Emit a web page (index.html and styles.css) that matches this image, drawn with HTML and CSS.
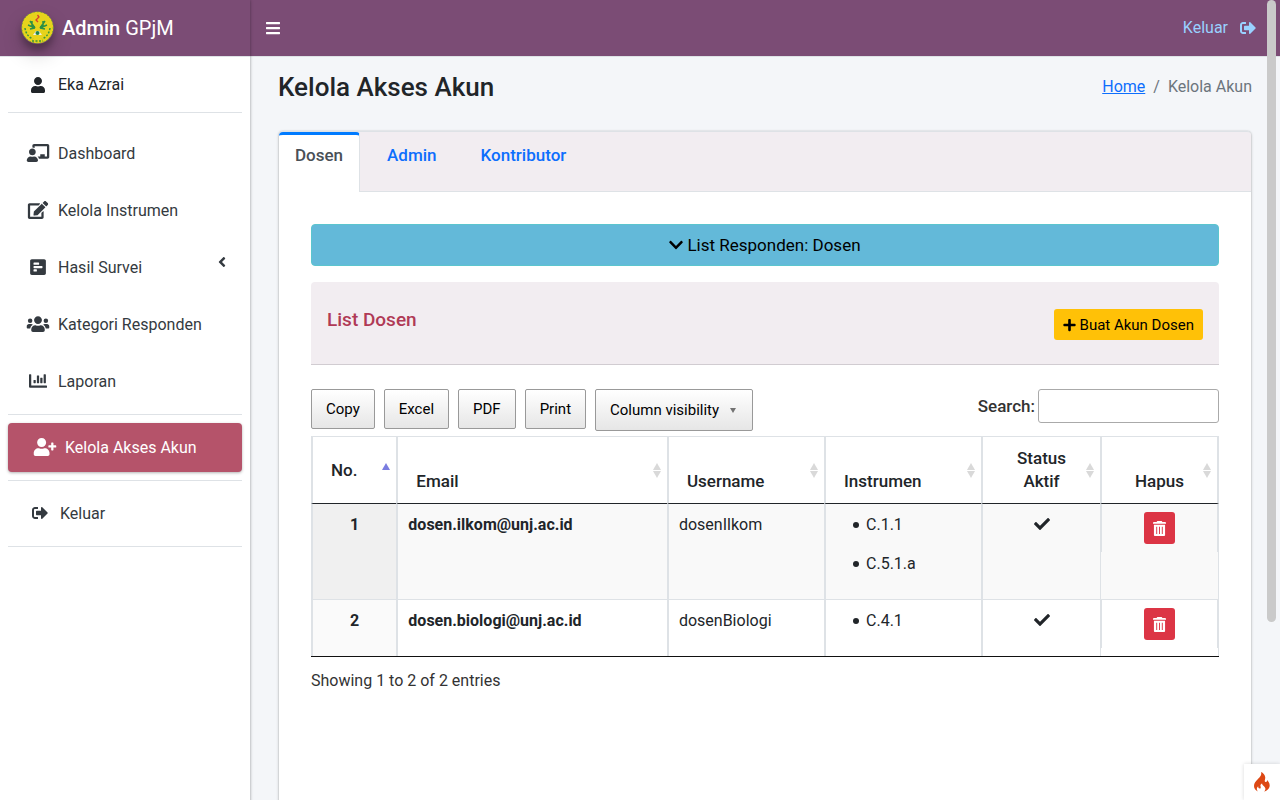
FILE: index.html
```html
<!DOCTYPE html>
<html lang="id">
<head>
<meta charset="utf-8">
<title>Admin GPjM</title>
<link rel="stylesheet" href="styles.css">
</head>
<body>
<svg class="defs" aria-hidden="true">
  <symbol id="user" viewBox="0 0 448 512"><path d="M224 256c70.7 0 128-57.3 128-128S294.700 0 224 0 96 57.300 96 128s57.300 128 128 128zm89.600 32h-16.700c-22.200 10.200-46.900 16-72.900 16s-50.600-5.800-72.900-16h-16.700C60.200 288 0 348.200 0 422.400V464c0 26.500 21.500 48 48 48h352c26.500 0 48-21.500 48-48v-41.600c0-74.200-60.200-134.400-134.400-134.400z"/></symbol>
  <symbol id="bars" viewBox="0 0 448 512"><path d="M16 132h416c9 0 16-7 16-16V76c0-9-7-16-16-16H16C7 60 0 67 0 76v40c0 9 7 16 16 16zm0 160h416c9 0 16-7 16-16v-40c0-9-7-16-16-16H16c-9 0-16 7-16 16v40c0 9 7 16 16 16zm0 160h416c9 0 16-7 16-16v-40c0-9-7-16-16-16H16c-9 0-16 7-16 16v40c0 9 7 16 16 16z"/></symbol>
  <symbol id="signout" viewBox="0 0 512 512"><path d="M497 273L329 441c-15 15-41 4.500-41-17v-96H152c-13.300 0-24-10.700-24-24v-96c0-13.300 10.700-24 24-24h136V88c0-21.400 25.900-32 41-17l168 168c9.300 9.400 9.300 24.600 0 34zM192 436v-40c0-6.600-5.400-12-12-12H96c-17.700 0-32-14.300-32-32V160c0-17.700 14.300-32 32-32h84c6.600 0 12-5.400 12-12V76c0-6.600-5.400-12-12-12H96c-53 0-96 43-96 96v192c0 53 43 96 96 96h84c6.600 0 12-5.400 12-12z"/></symbol>
  <symbol id="teacher" viewBox="0 0 640 512"><path d="M208 352c-2.400 0-4.800.35-7.060 1.090C187.980 357.300 174.350 360 160 360c-14.350 0-27.980-2.700-40.950-6.910-2.280-.74-4.660-1.090-7.050-1.090C49.940 352-.33 402.480 0 464.620.14 490.880 21.730 512 48 512h224c26.270 0 47.860-21.120 48-47.380.33-62.140-49.940-112.620-112-112.620zm-48-32c53.020 0 96-42.980 96-96s-42.980-96-96-96-96 42.980-96 96 42.980 96 96 96zM592 0H208c-26.470 0-48 22.250-48 49.590V96c23.420 0 45.100 6.780 64 17.800V64h352v288h-64v-64H384v64h-76.240c19.100 16.690 33.120 38.730 39.690 64H592c26.470 0 48-22.250 48-49.590V49.590C640 22.250 618.470 0 592 0z"/></symbol>
  <symbol id="edit" viewBox="0 0 576 512"><path d="M402.6 83.2l90.2 90.2c3.8 3.8 3.8 10 0 13.8L274.4 405.6l-92.8 10.3c-12.4 1.4-22.9-9.1-21.5-21.5l10.3-92.8L388.8 83.2c3.8-3.8 10-3.8 13.8 0zm162-22.9l-48.8-48.8c-15.2-15.2-39.9-15.2-55.2 0l-35.4 35.4c-3.8 3.8-3.8 10 0 13.8l90.2 90.2c3.8 3.8 10 3.8 13.8 0l35.4-35.4c15.2-15.3 15.2-40 0-55.2zM384 346.2V448H64V128h229.800c3.2 0 6.2-1.3 8.5-3.5l40-40c7.6-7.6 2.2-20.5-8.5-20.5H48C21.500 64 0 85.500 0 112v352c0 26.500 21.500 48 48 48h352c26.500 0 48-21.500 48-48V306.200c0-10.700-12.900-16-20.500-8.500l-40 40c-2.200 2.300-3.500 5.300-3.500 8.500z"/></symbol>
  <symbol id="poll" viewBox="0 0 448 512"><path d="M448 432V80c0-26.500-21.500-48-48-48H48C21.500 32 0 53.500 0 80v352c0 26.500 21.500 48 48 48h352c26.500 0 48-21.500 48-48zM112 192c-9 0-16-7-16-16v-32c0-9 7-16 16-16h128c9 0 16 7 16 16v32c0 9-7 16-16 16H112zm0 96c-9 0-16-7-16-16v-32c0-9 7-16 16-16h224c9 0 16 7 16 16v32c0 9-7 16-16 16H112zm0 96c-9 0-16-7-16-16v-32c0-9 7-16 16-16h64c9 0 16 7 16 16v32c0 9-7 16-16 16h-64z"/></symbol>
  <symbol id="users" viewBox="0 0 640 512"><circle cx="96" cy="160" r="64"/><circle cx="544" cy="160" r="64"/><path d="M576 256h-64c-17.600 0-33.500 7.100-45.100 18.600 40.300 22.100 68.900 62 75.100 109.400h66c17.700 0 32-14.300 32-32v-32c0-35.300-28.700-64-64-64zm-256 0c61.900 0 112-50.100 112-112S381.900 32 320 32 208 82.100 208 144s50.100 112 112 112zm76.800 32h-8.300c-20.800 10-43.900 16-68.500 16s-47.600-6-68.500-16h-8.300C179.600 288 128 339.600 128 403.200V432c0 26.500 21.500 48 48 48h288c26.500 0 48-21.500 48-48v-28.800c0-63.600-51.600-115.200-115.200-115.200zm-223.700-13.400C161.500 263.100 145.600 256 128 256H64c-35.300 0-64 28.700-64 64v32c0 17.700 14.300 32 32 32h65.900c6.300-47.400 34.900-87.300 75.200-109.400z"/></symbol>
  <symbol id="chart" viewBox="0 0 512 512"><path d="M0 80a16 16 0 0 1 16-16h32a16 16 0 0 1 16 16v304h432a16 16 0 0 1 16 16v32a16 16 0 0 1-16 16H32a32 32 0 0 1-32-32z"/><rect x="128" y="224" width="64" height="96" rx="13"/><rect x="224" y="96" width="64" height="224" rx="13"/><rect x="320" y="160" width="64" height="160" rx="13"/><rect x="416" y="64" width="64" height="256" rx="13"/></symbol>
  <symbol id="userplus" viewBox="0 0 640 512"><path d="M624 208h-64v-64c0-8.800-7.200-16-16-16h-32c-8.800 0-16 7.200-16 16v64h-64c-8.800 0-16 7.200-16 16v32c0 8.800 7.200 16 16 16h64v64c0 8.800 7.200 16 16 16h32c8.800 0 16-7.200 16-16v-64h64c8.800 0 16-7.200 16-16v-32c0-8.800-7.200-16-16-16zm-400 48c70.700 0 128-57.300 128-128S294.700 0 224 0 96 57.300 96 128s57.300 128 128 128zm89.600 32h-16.700c-22.200 10.200-46.900 16-72.900 16s-50.600-5.800-72.900-16h-16.700C60.200 288 0 348.200 0 422.400V464c0 26.500 21.500 48 48 48h352c26.500 0 48-21.500 48-48v-41.600c0-74.200-60.200-134.400-134.400-134.400z"/></symbol>
  <symbol id="angle" viewBox="0 0 256 512"><path d="M31.700 239l136-136c9.400-9.400 24.600-9.400 33.900 0l22.600 22.600c9.400 9.400 9.400 24.600 0 33.900L127.900 256l96.400 96.400c9.400 9.400 9.400 24.600 0 33.900L201.700 409c-9.400 9.400-24.600 9.400-33.900 0l-136-136c-9.500-9.400-9.500-24.600-.1-34z"/></symbol>
  <symbol id="chevron" viewBox="0 0 448 512"><path d="M207 381.500L12.700 187.100c-9.400-9.400-9.400-24.600 0-33.900l22.700-22.700c9.400-9.400 24.500-9.400 33.900 0L224 284.500l154.700-154c9.400-9.300 24.500-9.300 33.900 0l22.700 22.700c9.400 9.400 9.400 24.600 0 33.900L241 381.500c-9.400 9.400-24.600 9.400-34 0z"/></symbol>
  <symbol id="plus" viewBox="0 0 448 512"><path d="M416 208H272V64c0-17.700-14.300-32-32-32h-32c-17.700 0-32 14.300-32 32v144H32c-17.700 0-32 14.300-32 32v32c0 17.700 14.300 32 32 32h144v144c0 17.700 14.300 32 32 32h32c17.700 0 32-14.300 32-32V304h144c17.700 0 32-14.300 32-32v-32c0-17.700-14.300-32-32-32z"/></symbol>
  <symbol id="check" viewBox="0 0 512 512"><path d="M173.900 439.400L7.500 273c-10-10-10-26.200 0-36.200l36.200-36.200c10-10 26.200-10 36.200 0L192 312.700 432.100 72.600c10-10 26.200-10 36.200 0l36.200 36.200c10 10 10 26.200 0 36.200L210.100 439.400c-10 10-26.200 10-36.200 0z"/></symbol>
  <symbol id="trash" viewBox="0 0 14 16"><path d="M4 1q0-1 1-1h4q1 0 1 1h3q1 0 1 1v1H0V2q0-1 1-1z"/><path fill-rule="evenodd" d="M1 4h12v11q0 1-1 1H2q-1 0-1-1zM3.500 6v8h1V6zM6.500 6v8h1V6zM9.500 6v8h1V6z"/></symbol>
</svg>
<div class="app">
  <aside class="sidebar">
    <a class="brand" href="#">
      <svg class="logo" viewBox="0 0 33 33" aria-hidden="true">
        <circle cx="16.500" cy="16.500" r="15.800" fill="#e6d31c" stroke="#5f9b34" stroke-width="1" stroke-dasharray="1.500 2"/>
        <path d="M9 10l5 7M7 14l7 3M9 18l5-1M24 10l-5 7M26 14l-7 3M24 18l-5-1M11 10v5M22 10v5" stroke="#2c8f45" stroke-width="1.500" fill="none"/>
        <path d="M4 17q1 8 8 11M29 17q-1 8-8 11M11 30h11" stroke="#39963b" stroke-width="1.500" stroke-dasharray="2 1.500" fill="none"/>
        <path d="M12 24l3-4h3l3 4z" fill="#eef0e8"/><circle cx="16.500" cy="22" r="2" fill="#22844a"/>
        <path d="M16.500 4l1.500 2-3 3 2 2" stroke="#d8402b" stroke-width="1.300" fill="none"/>
      </svg>
      <span><b>Admin</b> GPjM</span>
    </a>
    <div class="user-panel"><span class="ico"><svg class="i16"><use href="#user"/></svg></span><a href="#">Eka Azrai</a></div>
    <nav class="nav">
      <a class="item" href="#"><span class="ico"><svg class="i18"><use href="#teacher"/></svg></span>Dashboard</a>
      <a class="item" href="#"><span class="ico"><svg class="i18"><use href="#edit"/></svg></span>Kelola Instrumen</a>
      <a class="item" href="#"><span class="ico"><svg class="i18"><use href="#poll"/></svg></span>Hasil Survei<svg class="arrow"><use href="#angle"/></svg></a>
      <a class="item" href="#"><span class="ico"><svg class="i18"><use href="#users"/></svg></span>Kategori Responden</a>
      <a class="item" href="#"><span class="ico"><svg class="i18"><use href="#chart"/></svg></span>Laporan</a>
      <hr>
      <a class="item active" href="#"><span class="ico"><svg class="i18"><use href="#userplus"/></svg></span>Kelola Akses Akun</a>
      <hr>
      <a class="item logout" href="#"><span class="ico"><svg class="i16"><use href="#signout"/></svg></span>Keluar</a>
      <hr>
    </nav>
  </aside>
  <div class="page">
    <header class="topbar">
      <button class="menu" aria-label="Menu"><svg><use href="#bars"/></svg></button>
      <a href="#">Keluar <svg><use href="#signout"/></svg></a>
    </header>
    <main class="content">
      <div class="heading">
        <h1>Kelola Akses Akun</h1>
        <nav class="crumbs"><a href="#">Home</a><span>/</span><span>Kelola Akun</span></nav>
      </div>
      <section class="card">
        <div class="tabs" role="tablist">
          <button class="tab selected" role="tab" aria-selected="true">Dosen</button>
          <button class="tab" role="tab">Admin</button>
          <button class="tab" role="tab">Kontributor</button>
        </div>
        <div class="card-body">
          <button class="collapse"><svg><use href="#chevron"/></svg>List Responden: Dosen</button>
          <div class="panel-head">
            <h2>List Dosen</h2>
            <button class="create"><svg><use href="#plus"/></svg>Buat Akun Dosen</button>
          </div>
          <div class="tools">
            <div class="exports">
              <button>Copy</button><button>Excel</button><button>PDF</button><button>Print</button>
              <button class="colvis">Column visibility <span class="caret"></span></button>
            </div>
            <div class="search"><label for="search">Search:</label><input id="search" type="search"></div>
          </div>
          <table>
            <colgroup><col class="c-no"><col class="c-email"><col class="c-mid"><col class="c-mid"><col class="c-end"><col class="c-end"></colgroup>
            <thead>
              <tr><th class="no asc">No.</th><th>Email</th><th>Username</th><th>Instrumen</th><th class="mid">Status Aktif</th><th class="mid">Hapus</th></tr>
            </thead>
            <tbody>
              <tr class="odd">
                <td class="num">1</td><td class="mail">dosen.ilkom@unj.ac.id</td><td>dosenIlkom</td>
                <td><ul><li>C.1.1</li><li>C.5.1.a</li></ul></td>
                <td class="tick"><svg><use href="#check"/></svg></td>
                <td class="del"><div><button aria-label="Hapus"><svg><use href="#trash"/></svg></button></div></td>
              </tr>
              <tr>
                <td class="num">2</td><td class="mail">dosen.biologi@unj.ac.id</td><td>dosenBiologi</td>
                <td><ul><li>C.4.1</li></ul></td>
                <td class="tick"><svg><use href="#check"/></svg></td>
                <td class="del"><div><button aria-label="Hapus"><svg><use href="#trash"/></svg></button></div></td>
              </tr>
            </tbody>
          </table>
          <p class="info">Showing 1 to 2 of 2 entries</p>
        </div>
      </section>
    </main>
  </div>
  <div class="scroll-thumb"></div>
  <a class="debug" href="#" aria-label="Debug"><svg viewBox="0 0 16 20"><path d="M7 0c1 3-1 5-3.500 7.500C1.500 9.500 0 11.200 0 14c0 2.500 1.500 4.600 4 5.500-1.600-1.700-1.600-3.600.2-5.200-.1 1.500.6 2.200 1.500 2.200 1.700 0 .9-1.800.7-3 .2-1 .8-1.700 1.700-2-.3 1.800 3.600 3 3.300 5.600-.1 1.100-.6 1.800-1.300 2.400 3.200-.8 5.600-3 5.600-6 0-2.500-1.300-3.800-2.400-5.500-.1 1.300-.7 2-1.600 1.900-2-.3-.1-3-.5-5C10.700 2.600 9.300.9 7 0z"/></svg></a>
</div>
</body>
</html>
```
FILE: styles.css
```css
* { box-sizing: border-box; }
body {
  margin: 0;
  font: 16px/24px Roboto, "Liberation Sans", sans-serif;
  color: #212529;
  background: #f4f6f9;
}
button, input { font: inherit; color: inherit; }
button { cursor: pointer; }
a { color: inherit; text-decoration: none; }
svg { fill: currentColor; }
.defs { display: none; }
.app {
  position: relative;
  display: grid;
  grid-template-columns: 250px minmax(0, 1fr);
  height: 100vh;
  overflow: hidden;
}

.sidebar {
  background: #fff;
  color: #343a40;
  box-shadow: 0 0 3px rgba(0, 0, 0, .4);
  z-index: 1;
}
.brand {
  display: flex;
  align-items: center;
  gap: 8px;
  height: 57px;
  padding: 0 21px 1px;
  background: #7b4c75;
  border-bottom: 1px solid #dee2e6;
  color: #fff;
  font-size: 20px;
  font-weight: 400;
}
.brand b { font-weight: 500; }
.logo {
  width: 33px;
  height: 33px;
  border-radius: 50%;
  box-shadow: 0 10px 20px rgba(0, 0, 0, .19), 0 6px 6px rgba(0, 0, 0, .23);
}
.user-panel {
  display: flex;
  align-items: center;
  height: 56px;
  margin: 0 8px;
  padding-left: 16px;
  border-bottom: 1px solid #dee2e6;
  color: #212529;
}
.ico {
  display: flex;
  justify-content: center;
  width: 28px;
  margin-right: 6px;
}
.i16 { width: 24px; height: 16px; }
.i18 { width: 24px; height: 18px; }
.nav { padding: 12px 8px; }
.item {
  display: flex;
  align-items: center;
  height: 57px;
  padding-left: 16px;
}
.item .ico { padding-bottom: 2px; }
.nav hr {
  height: 1px;
  margin: 4px 0;
  border: 0;
  background: #dee2e6;
}
.item.active {
  height: 49px;
  margin: 8px 0;
  padding-left: 23px;
  border-radius: 4px;
  background: #b5536a;
  color: #fff;
  box-shadow: 0 1px 3px rgba(0, 0, 0, .3);
}
.logout { padding-left: 18px; }
.arrow {
  width: 8px;
  height: 16px;
  margin: 0 16px 12px auto;
}

.topbar {
  display: flex;
  justify-content: space-between;
  align-items: center;
  height: 57px;
  padding: 0 24px 1px 15px;
  background: #7b4c75;
  border-bottom: 1px solid #dee2e6;
  color: #99d1ff;
}
.topbar a { display: flex; align-items: center; gap: 12px; }
.topbar svg { width: 16px; height: 16px; }
.menu {
  display: flex;
  padding: 0;
  border: 0;
  background: none;
  color: #fff;
}
.content { padding: 0 28px; }
.heading {
  display: flex;
  justify-content: space-between;
  align-items: center;
  height: 74px;
  padding-bottom: 14px;
}
h1 { margin: 0; font-size: 26px; line-height: 30px; font-weight: 500; }
.crumbs { display: flex; gap: 8px; color: #6c757d; }
.crumbs a { color: #0d6efd; text-decoration: underline; }

.card {
  min-height: 800px;
  margin: 0 1px;
  border-radius: 4px;
  background: #fff;
  box-shadow: 0 0 1px rgba(0, 0, 0, .25), 0 1px 3px rgba(0, 0, 0, .3);
}
.tabs {
  display: flex;
  gap: 10px;
  height: 61px;
  border-top: 1px solid #dee2e6;
  border-bottom: 1px solid #dee2e6;
  border-radius: 4px 4px 0 0;
  background: #f2edf1;
}
.tab {
  display: flex;
  height: 60px;
  padding: 8px 16px;
  border: 0 solid transparent;
  border-width: 3px 1px 0;
  border-radius: 4px 4px 0 0;
  background: none;
  color: #0d6efd;
  font-size: 17px;
  font-weight: 500;
}
.tab.selected {
  border-top-color: #007bff;
  border-right-color: #dee2e6;
  border-left-width: 0;
  background: #fff;
  color: #495057;
}
.card-body { padding: 32px; }
.collapse {
  display: flex;
  justify-content: center;
  align-items: center;
  gap: 4px;
  width: 100%;
  height: 42px;
  border: 1px solid #5bc5ce;
  border-radius: 4px;
  background: #63b9d9;
  color: #000;
}
.collapse svg { width: 14px; height: 16px; }
.panel-head {
  display: flex;
  justify-content: space-between;
  align-items: flex-start;
  margin: 16px 0 24px;
  height: 83px;
  padding: 27px 16px;
  border-bottom: 1px solid #d1ccd1;
  border-radius: 4px 4px 0 0;
  background: #f2edf1;
}
h2 { margin: 0; font-size: 19px; line-height: 22px; font-weight: 500; color: #b03a56; }
.create {
  display: flex;
  align-items: center;
  gap: 4px;
  height: 31px;
  padding: 0 9px;
  border: 0;
  border-radius: 3px;
  background: #ffc107;
  color: #000;
  font-size: 15px;
}
.create svg { width: 13px; height: 14px; }
.collapse { font-size: 17px; }
.tools {
  display: flex;
  justify-content: space-between;
  align-items: flex-start;
  height: 47px;
}
.exports { display: flex; align-items: flex-start; gap: 9px; }
.exports button {
  height: 40px;
  padding: 0 14px;
  border: 1px solid #999;
  border-radius: 2px;
  background: linear-gradient(#fff, #e6e6e6);
  color: #000;
  font-size: 15px;
}
.exports .colvis { height: 42px; }
.caret {
  display: inline-block;
  margin: 0 2px 2px 7px;
  border: 3px solid transparent;
  border-top: 5px solid #737373;
  border-bottom: 0;
}
.search { display: flex; align-items: center; gap: 3px; color: #333; }
.search label { font-size: 17px; font-weight: 500; }
.search input {
  width: 181px;
  height: 34px;
  border: 1px solid #aaa;
  border-radius: 3px;
  background: #fff;
}

table {
  width: 100%;
  table-layout: fixed;
  border-collapse: separate;
  border-spacing: 0;
  border-bottom: 1px solid #111;
}
.c-no { width: 9.4%; }
.c-email { width: 29.8%; }
.c-mid { width: 17.3%; }
.c-end { width: 13.1%; }
th {
  position: relative;
  height: 68px;
  padding: 10px 18px;
  border: 0 solid #dee2e6;
  border-width: 1px 0 1px 2px;
  border-bottom-color: #212529;
  font-size: 17px;
  line-height: 23px;
  font-weight: 500;
  text-align: left;
  vertical-align: bottom;
}
th:last-child { border-right-width: 2px; }
th.no { vertical-align: middle; }
th.mid { padding: 10px 30px; text-align: center; }
th::before, th::after {
  content: "";
  position: absolute;
  right: 6px;
  border: 4px solid transparent;
}
th::before { top: 26px; border-top: 0; border-bottom: 7px solid #d9d9d9; }
th::after { top: 34px; border-bottom: 0; border-top: 7px solid #d9d9d9; }
th.asc::before { border-bottom-color: #7a7de0; }
th.asc::after { display: none; }
td {
  height: 56px;
  padding: 9px 10px;
  border-left: 2px solid #dee2e6;
  vertical-align: top;
}
.odd td { height: 96px; background: #f9f9f9; border-bottom: 1px solid #dee2e6; }
.num { background: #fafafa; font-weight: 700; text-align: center; }
.odd .num { background: #f0f0f0; }
.mail { font-weight: 700; }
ul { margin: 0; padding-left: 17px; list-style: none; }
li { display: flex; align-items: center; gap: 7px; }
li::before {
  content: "";
  width: 6px;
  height: 6px;
  border-radius: 50%;
  background: currentColor;
}
li + li { margin-top: 15px; }
.tick { text-align: center; }
.tick svg { width: 16px; height: 16px; vertical-align: top; margin-top: 3px; }
td.del { padding: 0; border-left-width: 1px; border-right: 1px solid #dee2e6; }
.del div {
  display: flex;
  justify-content: center;
  height: 48px;
  padding-top: 8px;
  border: 0 solid #dee2e6;
  border-width: 0 1px;
}
.del button {
  display: flex;
  justify-content: center;
  align-items: center;
  width: 31px;
  height: 32px;
  border: 0;
  border-radius: 3px;
  background: #dc3545;
  color: #fff;
}
.del svg { width: 13px; height: 15px; flex: none; }
.info { margin: 12px 0 0; color: #333; }

.scroll-thumb {
  position: absolute;
  top: 0;
  right: 4px;
  width: 9px;
  height: 622px;
  border-radius: 5px;
  background: #cacaca;
}
.debug {
  position: absolute;
  right: 0;
  bottom: 0;
  display: flex;
  justify-content: center;
  align-items: center;
  width: 36px;
  height: 36px;
  background: #fff;
  box-shadow: 0 0 4px rgba(0, 0, 0, .15);
  color: #dd4814;
  z-index: 2;
}
.debug svg { width: 16px; height: 20px; }
```
